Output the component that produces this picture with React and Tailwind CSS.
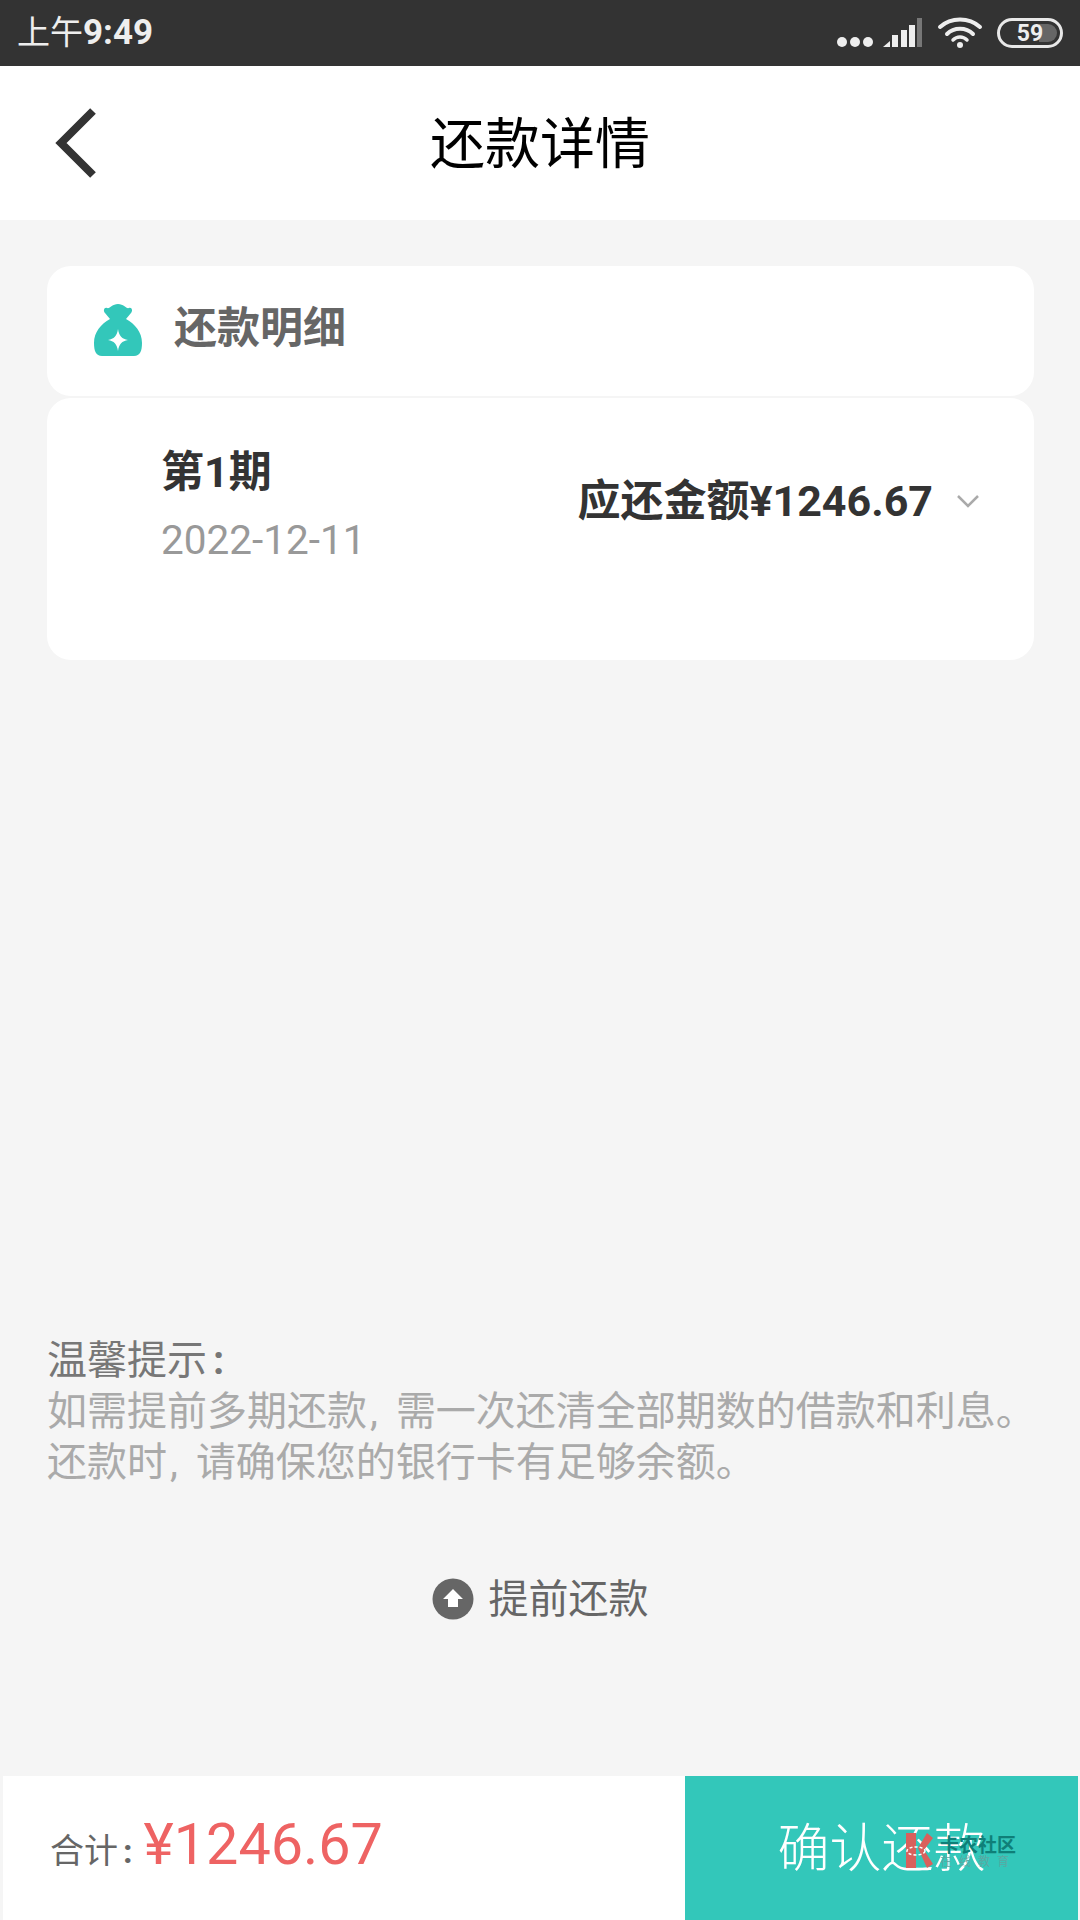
const cn = { fontFamily: 'Roboto, "Noto Sans CJK SC", sans-serif' }

function StatusBar() {
  return (
    <div className="flex h-[66px] items-center justify-between bg-[#333333] pl-[17px] pr-[17px] text-[#eeeeee]">
      <span className="text-[33px] leading-none -mt-[2px]" style={cn}>上午<span className="text-[35px] font-bold">9:49</span></span>
      <div className="flex items-center">
        <div className="flex gap-[3px] mt-[18px]">
          <span className="h-[10px] w-[10px] rounded-full bg-[#eeeeee]" />
          <span className="h-[10px] w-[10px] rounded-full bg-[#eeeeee]" />
          <span className="h-[10px] w-[10px] rounded-full bg-[#eeeeee]" />
        </div>
        <svg width="42" height="32" viewBox="0 0 42 32" className="ml-[9px]">
          <path d="M1 30 L8 30 L8 24 Z" fill="#eeeeee" />
          <rect x="10" y="18" width="6" height="12" fill="#eeeeee" />
          <rect x="19" y="13" width="6" height="17" fill="#eeeeee" />
          <rect x="27" y="8" width="6" height="22" fill="#eeeeee" />
          <rect x="35" y="1" width="5" height="29" fill="#777777" />
        </svg>
        <svg width="46" height="34" viewBox="0 0 46 34" className="ml-[13px]" fill="none" stroke="#eeeeee" strokeLinecap="round">
          <path d="M3 11 C14 1 32 1 43 11" strokeWidth="4" />
          <path d="M10 18 C17 11 29 11 36 18" strokeWidth="4" />
          <path d="M16 24 C20 20 26 20 30 24" strokeWidth="3.5" />
          <circle cx="23" cy="29" r="3" fill="#eeeeee" stroke="none" />
        </svg>
        <div className="relative ml-[14px] flex h-[30px] w-[66px] items-center justify-center overflow-hidden rounded-full border-[3px] border-[#e8e8e8]">
          <div className="absolute inset-y-[3px] right-[3px] w-[18px] rounded-r-full bg-[#666666]" />
          <span className="relative text-[23px] leading-none font-bold text-[#eeeeee]" style={cn}>59</span>
        </div>
      </div>
    </div>
  )
}

function MoneyBag() {
  return (
    <svg width="50" height="54" viewBox="0 0 50 54">
      <path
        d="M14 5 C17 6 19 1 25 1 C31 1 33 6 36 5 C39 4 40 8 38 10 L33 16 C42 21 49 29 49 40 C49 48 47 53 41 53 L9 53 C3 53 1 48 1 40 C1 29 8 21 17 16 L12 10 C10 8 11 4 14 5 Z"
        fill="#33c7ba"
      />
      <path d="M25 26 C26 33 29 36 35 37 C29 38 26 41 25 48 C24 41 21 38 15 37 C21 36 24 33 25 26 Z" fill="#ffffff" />
    </svg>
  )
}

function Detail() {
  return (
    <div className="flex flex-col gap-[2px] pl-[47px] pr-[46px] pt-[46px]">
      <div className="flex h-[130px] items-center rounded-[24px] bg-white pl-[46px]">
        <div className="-mt-[3px]"><MoneyBag /></div>
        <span className="ml-[31px] text-[43px] leading-none font-bold text-[#666666] -mt-[5px]" style={cn}>还款明细</span>
      </div>
      <div className="flex h-[262px] items-start justify-between rounded-[24px] bg-white pl-[114px] pr-[54px]">
        <div className="flex flex-col pt-[52px]">
          <span className="text-[43px] leading-[44px] font-bold text-[#333333]" style={cn}>第1期</span>
          <span className="mt-[24px] text-[40.5px] leading-[44px] text-[#999999]" style={cn}>2022-12-11</span>
        </div>
        <div className="flex items-center pt-[81px]">
          <span className="text-[43px] leading-[44px] font-bold text-[#333333]" style={cn}>应还金额¥1246.67</span>
          <svg width="24" height="16" viewBox="0 0 24 16" className="ml-[23px]" fill="none" stroke="#aaaaaa" strokeWidth="2.5">
            <path d="M2 3 L12 13 L22 3" />
          </svg>
        </div>
      </div>
    </div>
  )
}

export default function App() {
  return (
    <div className="flex h-[1920px] w-[1080px] flex-col bg-[#f5f5f5]" style={cn}>
      <StatusBar />
      <div className="relative flex h-[154px] items-center justify-center bg-white">
        <svg width="46" height="72" viewBox="0 0 46 72" className="absolute left-[54px] top-[42px]" fill="none" stroke="#333333" strokeWidth="8">
          <path d="M39 3 L7 35 L39 67" />
        </svg>
        <span className="mt-[3px] text-[55px] leading-none text-black" style={cn}>还款详情</span>
      </div>
      <Detail />
      <div className="mt-[675px] whitespace-nowrap pl-[47px] text-[40px] leading-[51px] text-[#aaaaaa]">
        <div className="text-[#777777]">温馨提示<span className="ml-[6px] font-bold">:</span></div>
        <div>如需提前多期还款<span className="ml-[3px] mr-[18px]">,</span>需一次还清全部期数的借款和利息。</div>
        <div>还款时<span className="ml-[3px] mr-[18px]">,</span>请确保您的银行卡有足够余额。</div>
      </div>
      <div className="mt-[90px] flex items-center justify-center">
        <svg width="42" height="42" viewBox="0 0 42 42">
          <circle cx="21" cy="21" r="20.5" fill="#666666" />
          <path d="M21 11 L31 21 L26 21 L26 29 L16 29 L16 21 L11 21 Z" fill="#ffffff" />
        </svg>
        <span className="ml-[15px] mt-[2px] text-[40px] leading-none text-[#666666]">提前还款</span>
      </div>
      <div className="mt-auto flex h-[144px] pl-[3px] pr-[2px]">
        <div className="flex flex-1 items-center bg-white pl-[47px]">
          <span className="text-[34px] leading-none text-[#666666] mt-[6px]">合计<span className="ml-[5px] font-bold">:</span></span>
          <span className="ml-[11px] text-[57.5px] leading-none text-[#ee6363] -mt-[6px]" style={cn}>¥1246.67</span>
        </div>
        <div className="relative flex w-[393px] items-center justify-center bg-[#33c7ba]">
          <span className="mt-[3px] text-[52px] leading-none font-light text-white">确认还款</span>
          <div className="absolute left-[220px] top-[57px] flex items-start">
            <svg width="28" height="35" viewBox="0 0 28 35">
              <path d="M1 0 L11 0 L11 35 L1 35 Z M13 15 L22 0 L28 5 L19 17 L28 31 L22 35 Z" fill="#d9605c" />
              <ellipse cx="11" cy="18" rx="9" ry="4" fill="none" stroke="#ffffff" strokeWidth="1.5" strokeDasharray="3 2" />
            </svg>
            <div className="ml-[7px] flex flex-col pt-[3px]">
              <span className="text-[19px] leading-[20px] font-bold text-[#0f7f78]">卡农社区</span>
              <span className="text-[12px] leading-[13px] tracking-[7px] text-[#5aa8a2]">在线教育</span>
            </div>
          </div>
        </div>
      </div>
    </div>
  )
}
